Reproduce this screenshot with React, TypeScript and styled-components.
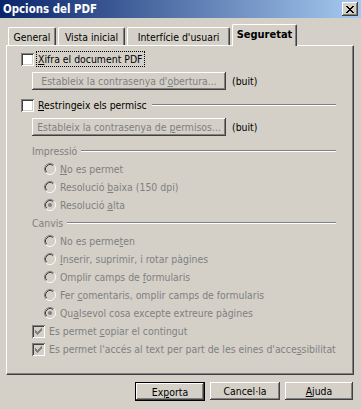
import * as React from 'react';
import styled, { createGlobalStyle } from 'styled-components';

const GlobalStyle = createGlobalStyle`
  html, body {
    margin: 0;
    padding: 0;
    background: #d4d0c8;
  }
  body {
    font-family: "DejaVu Sans Condensed", "Liberation Sans", Arial, sans-serif;
    font-size: 10.4px;
    color: #000;
  }
`;

const Window = styled.div`
  width: 361px;
  height: 409px;
  background: #d4d0c8;
  display: flex;
  flex-direction: column;
  overflow: hidden;
`;

const TitleBar = styled.div`
  height: 18px;
  display: flex;
  align-items: center;
  justify-content: space-between;
  padding: 0 3px;
  background: linear-gradient(to right, #0a246a, #a6caf0);
`;

const Title = styled.span`
  color: #fff;
  font-weight: bold;
  font-size: 11.4px;
`;

const CloseButton = styled.div`
  width: 16px;
  height: 14px;
  display: flex;
  align-items: center;
  justify-content: center;
  background: #d4d0c8;
  box-shadow: inset -1px -1px #404040, inset 1px 1px #fff, inset -2px -2px #808080;
`;

const TabStrip = styled.div`
  display: flex;
  align-items: flex-end;
  height: 21px;
  margin-top: 6px;
  padding-left: 8px;
  position: relative;
  z-index: 1;
`;

const Tab = styled.div<{ $w: number; $active?: boolean }>`
  width: ${(p) => p.$w}px;
  height: ${(p) => (p.$active ? 22 : 18)}px;
  margin-right: 2px;
  margin-bottom: ${(p) => (p.$active ? -1 : 0)}px;
  box-sizing: border-box;
  display: flex;
  align-items: center;
  justify-content: center;
  padding-bottom: ${(p) => (p.$active ? 2 : 0)}px;
  background: #d4d0c8;
  border-top: 1px solid #fff;
  border-left: 1px solid #fff;
  border-right: 1px solid #404040;
  border-radius: 2px 2px 0 0;
  box-shadow: inset -1px 0 #808080;
  font-weight: ${(p) => (p.$active ? 'bold' : 'normal')};
  font-size: ${(p) => (p.$active ? 11 : 10.4)}px;
  white-space: nowrap;
`;

const Panel = styled.div`
  margin: 0 7px 0 6px;
  height: 330px;
  box-sizing: border-box;
  border-top: 1px solid #fff;
  border-left: 1px solid #fff;
  border-right: 1px solid #404040;
  border-bottom: 1px solid #404040;
  box-shadow: inset -1px -1px #808080;
  padding: 4px 17px 0 0;
  display: flex;
  flex-direction: column;
`;

const Row = styled.div<{ $indent: number; $top?: number }>`
  display: flex;
  align-items: center;
  height: 18px;
  margin-top: ${(p) => p.$top ?? 0}px;
  padding-left: ${(p) => p.$indent}px;
  white-space: nowrap;
`;

const Label = styled.span<{ $disabled?: boolean; $focus?: boolean }>`
  margin-left: 3px;
  padding: 1px 1px;
  color: ${(p) => (p.$disabled ? '#808080' : '#000')};
  outline: ${(p) => (p.$focus ? '1px dotted #000' : 'none')};
  outline-offset: 0;
`;

const Etched = styled.div<{ $gap: number }>`
  flex: 1;
  height: 0;
  margin-left: ${(p) => p.$gap}px;
  border-top: 1px solid #808080;
  border-bottom: 1px solid #fff;
`;

const GroupTitle = styled.span`
  color: #808080;
`;

const Key = styled.u`
  text-decoration: underline;
  text-underline-offset: 1px;
`;

const PushButton = styled.div<{ $w: number; $default?: boolean; $disabled?: boolean }>`
  width: ${(p) => p.$w}px;
  height: ${(p) => (p.$default ? 19 : 18)}px;
  box-sizing: border-box;
  display: flex;
  align-items: center;
  justify-content: center;
  background: #d4d0c8;
  color: ${(p) => (p.$disabled ? '#808080' : '#000')};
  border: ${(p) => (p.$default ? '1px solid #000' : 'none')};
  box-shadow: inset -1px -1px #404040, inset 1px 1px #fff, inset -2px -2px #808080;
  white-space: nowrap;
`;

const Caption = styled.span`
  white-space: pre;
`;

const Aside = styled.span`
  margin-left: 6px;
`;

const Footer = styled.div`
  display: flex;
  justify-content: flex-end;
  gap: 5px;
  margin-top: 7px;
  padding-right: 8px;
`;

const Box = styled.span<{ $disabled?: boolean }>`
  width: 13px;
  height: 13px;
  flex: none;
  box-sizing: border-box;
  display: flex;
  align-items: center;
  justify-content: center;
  background: ${(p) => (p.$disabled ? '#d4d0c8' : '#fff')};
  box-shadow: inset 1px 1px #808080, inset -1px -1px #fff, inset 2px 2px #404040,
    inset -2px -2px #d4d0c8;
`;

const Checkbox = ({ checked, disabled }: { checked?: boolean; disabled?: boolean }) => (
  <Box $disabled={disabled}>
    {checked && (
      <svg width="7" height="7" viewBox="0 0 7 7" shapeRendering="crispEdges">
        <path
          d="M0 2h1v3h-1zM1 3h1v3h-1zM2 4h1v3h-1zM3 3h1v3h-1zM4 2h1v3h-1zM5 1h1v3h-1zM6 0h1v3h-1z"
          fill={disabled ? '#808080' : '#000'}
        />
      </svg>
    )}
  </Box>
);

const RadioMark = styled.svg`
  flex: none;
`;

const Radio = ({ checked }: { checked?: boolean }) => (
  <RadioMark width="12" height="12" viewBox="0 0 12 12">
    <circle cx="6" cy="6" r="5" fill="#d4d0c8" />
    <path d="M2.11 9.89 A5.5 5.5 0 0 1 9.89 2.11" fill="none" stroke="#808080" />
    <path d="M9.89 2.11 A5.5 5.5 0 0 1 2.11 9.89" fill="none" stroke="#fff" />
    <path d="M2.82 9.18 A4.5 4.5 0 0 1 9.18 2.82" fill="none" stroke="#404040" />
    <path d="M9.18 2.82 A4.5 4.5 0 0 1 2.82 9.18" fill="none" stroke="#d4d0c8" />
    {checked && <circle cx="6" cy="6" r="2" fill="#808080" />}
  </RadioMark>
);

const RadioRow = ({ children, checked }: { children: React.ReactNode; checked?: boolean }) => (
  <Row $indent={37}>
    <Radio checked={checked} />
    <Label $disabled>{children}</Label>
  </Row>
);

export default function App() {
  return (
    <Window>
      <GlobalStyle />
      <TitleBar>
        <Title>Opcions del PDF</Title>
        <CloseButton>
          <svg width="8" height="7" viewBox="0 0 8 7" shapeRendering="crispEdges">
            <path
              d="M0 0h2v1h-2zM6 0h2v1h-2zM1 1h2v1h-2zM5 1h2v1h-2zM2 2h4v1h-4zM3 3h2v1h-2zM2 4h4v1h-4zM1 5h2v1h-2zM5 5h2v1h-2zM0 6h2v1h-2zM6 6h2v1h-2z"
              fill="#000"
            />
          </svg>
        </CloseButton>
      </TitleBar>

      <TabStrip>
        <Tab $w={48}>General</Tab>
        <Tab $w={67}>Vista inicial</Tab>
        <Tab $w={103}>Interfície d'usuari</Tab>
        <Tab $w={65} $active>
          Seguretat
        </Tab>
      </TabStrip>

      <Panel>
        <Row $indent={14}>
          <Checkbox />
          <Label $focus>
            <Key>X</Key>ifra el document PDF
          </Label>
        </Row>
        <Row $indent={25} $top={4}>
          <PushButton $w={194} $disabled>
            <Caption>
              Estableix la contrasenya d'<Key>o</Key>bertura...
            </Caption>
          </PushButton>
          <Aside>(buit)</Aside>
        </Row>
        <Row $indent={14} $top={6}>
          <Checkbox />
          <Label>
            <Key>R</Key>estringeix els permisc
          </Label>
          <Etched $gap={4} />
        </Row>
        <Row $indent={25} $top={4}>
          <PushButton $w={194} $disabled>
            <Caption>
              Estableix la contrasenya de <Key>p</Key>ermisos...
            </Caption>
          </PushButton>
          <Aside>(buit)</Aside>
        </Row>

        <Row $indent={25} $top={6}>
          <GroupTitle>Impressió</GroupTitle>
          <Etched $gap={4} />
        </Row>
        <RadioRow>
          <Key>N</Key>o es permet
        </RadioRow>
        <RadioRow>
          Resolució <Key>b</Key>aixa (150 dpi)
        </RadioRow>
        <RadioRow checked>
          Resolució <Key>a</Key>lta
        </RadioRow>

        <Row $indent={25}>
          <GroupTitle>Canvis</GroupTitle>
          <Etched $gap={4} />
        </Row>
        <RadioRow>
          No es perme<Key>t</Key>en
        </RadioRow>
        <RadioRow>
          <Key>I</Key>nserir, suprimir, i rotar pàgines
        </RadioRow>
        <RadioRow>
          Omplir camps de <Key>f</Key>ormularis
        </RadioRow>
        <RadioRow>
          Fer <Key>c</Key>omentaris, omplir camps de formularis
        </RadioRow>
        <RadioRow checked>
          Qu<Key>a</Key>lsevol cosa excepte extreure pàgines
        </RadioRow>

        <Row $indent={25}>
          <Checkbox checked disabled />
          <Label $disabled>
            Es permet <Key>c</Key>opiar el contingut
          </Label>
        </Row>
        <Row $indent={25}>
          <Checkbox checked disabled />
          <Label $disabled>
            Es permet l'accés al text per part de les eines d'acce<Key>s</Key>sibilitat
          </Label>
        </Row>
      </Panel>

      <Footer>
        <PushButton $w={70} $default>
          <Caption>
            Ex<Key>p</Key>orta
          </Caption>
        </PushButton>
        <PushButton $w={70}>Cancel·la</PushButton>
        <PushButton $w={68}>
          <Caption>
            <Key>A</Key>juda
          </Caption>
        </PushButton>
      </Footer>
    </Window>
  );
}
